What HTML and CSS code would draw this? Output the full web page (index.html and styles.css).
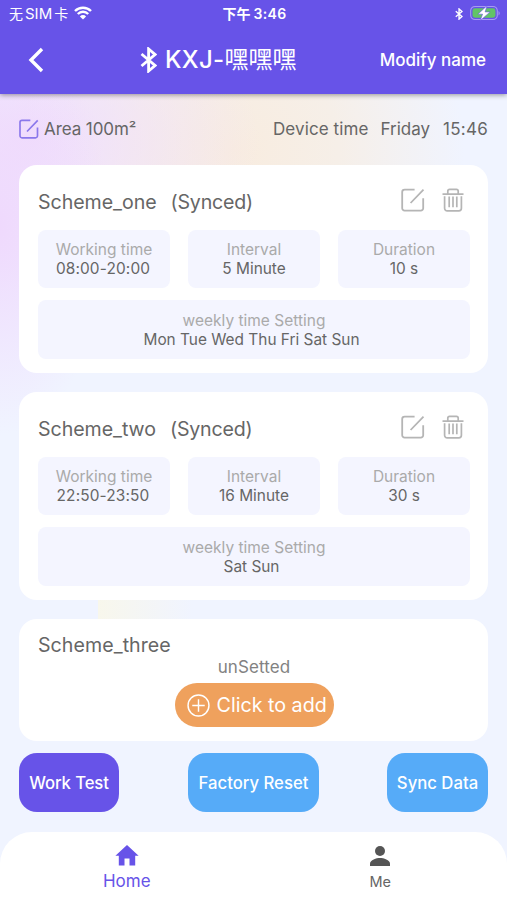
FILE: index.html
```html
<!DOCTYPE html>
<html lang="en">
<head>
<meta charset="utf-8">
<title>KXJ</title>
<link rel="stylesheet" href="styles.css">
</head>
<body>
<svg width="0" height="0" class="defs">
  <symbol id="bt" viewBox="0 0 17 26"><path d="M1.5 7 15 18.5 8.6 24V2L15 7.5 1.5 19"/></symbol>
  <symbol id="edit" viewBox="0 0 24 24"><path d="M13.6 1.6H3.6a2.4 2.4 0 0 0-2.4 2.4v16.2a2.4 2.4 0 0 0 2.4 2.4h16.2a2.4 2.4 0 0 0 2.4-2.4V10.3M9.6 15 22.5 1.6"/></symbol>
  <symbol id="trash" viewBox="0 0 22 24"><path d="M.5 6.2h21M5.8 6V3.2a1.8 1.8 0 0 1 1.8-1.8h6.8a1.8 1.8 0 0 1 1.8 1.8V6M2.6 8.2v12a2.6 2.6 0 0 0 2.6 2.6h11.6a2.6 2.6 0 0 0 2.6-2.6v-12M7.2 8.5v10.8M11 8.5v10.8M14.8 8.5v10.8"/></symbol>
</svg>
<header class="header">
  <div class="status">
    <div class="carrier"><span>无<b>SIM</b>卡</span>
      <svg class="wifi" viewBox="0 0 18 14"><path class="w" d="M1 5a11.3 11.3 0 0 1 16 0M3.8 8a7.3 7.3 0 0 1 10.4 0"/><path d="M9 13.6 5.9 10.4a4.4 4.4 0 0 1 6.2 0z" fill="#fff"/></svg>
    </div>
    <div class="clock">下午<span>3:46</span></div>
    <div class="power">
      <svg class="bt-small"><use href="#bt"/></svg>
      <svg class="battery" viewBox="0 0 31 16"><rect x=".7" y="1.2" width="27.5" height="13.6" rx="4.5" fill="none" stroke="#a79bf2" stroke-width="1.1"/><rect x="2.6" y="3.1" width="23.7" height="9.8" rx="2.5" fill="#62c466"/><path d="M29.5 6v4.6c1.6-.8 1.6-3.8 0-4.6z" fill="#a79bf2"/><path d="M17.6 .4 8.2 9.2h4.8L10.6 15.8 20.8 6.9h-5.2z" fill="#fff" stroke="#6753e8" stroke-width=".6"/></svg>
    </div>
  </div>
  <div class="appbar">
    <svg class="back" viewBox="0 0 16 26"><path d="M14 2 3 13l11 11"/></svg>
    <div class="title"><svg class="bt-big"><use href="#bt"/></svg><h1>KXJ-<span>嘿嘿嘿</span></h1></div>
    <div class="modify">Modify name</div>
  </div>
</header>
<main class="content">
  <div class="info">
    <svg class="ico-area"><use href="#edit"/></svg><span class="area">Area 100m²</span>
    <span class="dev">Device time</span><span class="day">Friday</span><span class="hour">15:46</span>
  </div>
  <section class="card">
    <div class="card-head"><h2>Scheme_one</h2><span class="sync">(Synced)</span><svg class="ico-edit"><use href="#edit"/></svg><svg class="ico-trash"><use href="#trash"/></svg></div>
    <div class="tiles">
      <div class="tile"><label>Working time</label><p class="range">08:00-20:00</p></div>
      <div class="tile"><label>Interval</label><p>5 Minute</p></div>
      <div class="tile"><label>Duration</label><p>10 s</p></div>
      <div class="tile week"><label>weekly time Setting</label><p>Mon Tue Wed Thu Fri Sat Sun</p></div>
    </div>
  </section>
  <section class="card second">
    <div class="card-head"><h2>Scheme_two</h2><span class="sync">(Synced)</span><svg class="ico-edit"><use href="#edit"/></svg><svg class="ico-trash"><use href="#trash"/></svg></div>
    <div class="tiles">
      <div class="tile"><label>Working time</label><p class="range">22:50-23:50</p></div>
      <div class="tile"><label>Interval</label><p>16 Minute</p></div>
      <div class="tile"><label>Duration</label><p>30 s</p></div>
      <div class="tile week"><label>weekly time Setting</label><p>Sat Sun</p></div>
    </div>
  </section>
  <section class="card third">
    <h2>Scheme_three</h2>
    <p class="unset">unSetted</p>
    <div class="add"><svg viewBox="0 0 24 24"><circle cx="12" cy="12" r="10.9"/><path d="M12 5.5v13M5.5 12h13"/></svg><span>Click to add</span></div>
  </section>
  <div class="actions">
    <div class="btn work">Work Test</div>
    <div class="btn factory">Factory Reset</div>
    <div class="btn syncdata">Sync Data</div>
  </div>
</main>
<nav class="nav">
  <div class="tab home"><svg viewBox="0 0 24 21"><path d="M12 0 .4 10.7h3.4V20.5h5.7v-7h5v7h5.7v-9.8h3.4z"/></svg><span>Home</span></div>
  <div class="tab me"><svg viewBox="0 0 20 20"><circle cx="10" cy="5" r="5"/><path d="M0 20v-2.5C0 14 6.5 12 10 12s10 2 10 5.5V20z"/></svg><span>Me</span></div>
</nav>
</body>
</html>
```
FILE: styles.css
```css
* { box-sizing: border-box; margin: 0; padding: 0; }
body {
  width: 507px; height: 900px; overflow: hidden;
  display: flex; flex-direction: column;
  font-family: Inter, "Noto Sans CJK SC", sans-serif;
  color: #666; white-space: nowrap;
  background:
    linear-gradient(90deg, #f8f7ec, #f0f4ff00) 98px 595px / 95px 30px no-repeat,
    radial-gradient(ellipse 110px 210px at 0 225px, #efd9fd, #efd9fd00),
    radial-gradient(ellipse 230px 150px at 30px 140px, #f0defc, #f0defc00),
    radial-gradient(ellipse 230px 220px at 235px 150px, #f8ecdf, #f6efe8 45%, #f0f4ff00),
    #f0f4ff;
}
svg { display: block; flex: none; overflow: visible; fill: none; }
h1, h2 { font-weight: 400; }
.defs { position: absolute; }
.header { height: 94px; flex: none; background: #6753e8; color: #fff; box-shadow: 0 1px 5px #0006; }
.status { height: 27px; display: grid; grid-template-columns: 1fr auto 1fr; align-items: center; padding: 0 7px 0 9px; font-size: 14px; }
.carrier { display: flex; align-items: center; gap: 6px; line-height: 27px; }
.carrier b { font-weight: 400; font-size: 15px; margin: 0 2px; }
.wifi { width: 18px; height: 14px; margin-top: -2px; }
.wifi .w { stroke: #fff; stroke-width: 2.4; }
.clock { font-weight: 600; line-height: 27px; }
.clock span { margin-left: 3px; letter-spacing: .3px; }
.power { display: flex; justify-content: flex-end; align-items: center; gap: 7px; }
.bt-small { width: 8px; height: 12px; stroke: #fff; stroke-width: 3; }
.battery { width: 30px; height: 16px; margin-top: -1px; }
.appbar { height: 66px; display: grid; grid-template-columns: 100px 1fr 108px; align-items: center; padding: 0 21px 0 28px; }
.back { width: 16px; height: 26px; stroke: #fff; stroke-width: 3.4; }
.title { display: flex; align-items: center; gap: 8px; padding-left: 12px; }
.bt-big { width: 17px; height: 26px; stroke: #fff; stroke-width: 2.8; }
h1 { font-size: 24px; font-weight: 500; line-height: 34px; letter-spacing: .3px; }
h1 span { font-weight: 400; letter-spacing: 0; }
.modify { font-size: 17px; font-weight: 500; text-align: right; }
.content { flex: none; height: 738px; padding: 22px 19px 0 19px; }
.info { display: flex; align-items: center; height: 26px; font-size: 17px; }
.ico-area { width: 20px; height: 20px; stroke: #8b78eb; stroke-width: 2; }
.area { margin-left: 5px; letter-spacing: -.08px; }
.dev { margin-left: auto; letter-spacing: .1px; }
.day { margin-left: 12px; }
.hour { margin-left: 13px; letter-spacing: .25px; }
.card { height: 208px; margin-top: 23px; padding: 18px 18px 0 19px; background: #fff; border-radius: 18px; }
.second { margin-top: 19px; }
.card-head { display: flex; align-items: center; height: 38px; margin-bottom: 9px; }
h2, .sync { font-size: 19.6px; line-height: 30px; letter-spacing: -.05px; }
.sync { margin-left: 14px; letter-spacing: -.2px; }
.ico-edit { width: 24px; height: 24px; margin: -4px 17px 0 auto; stroke: #b5b5b5; stroke-width: 1.8; }
.ico-trash { width: 22px; height: 24px; margin: -4px 6px 0 0; stroke: #b5b5b5; stroke-width: 1.7; }
.tiles { display: grid; grid-template-columns: repeat(3, 132px); column-gap: 18px; row-gap: 12px; }
.tile { height: 58px; padding-top: 11px; border-radius: 8px; background: #f4f5ff; text-align: center; font-size: 15.4px; line-height: 19px; }
.tile label { display: block; font-size: 15.5px; line-height: 18px; color: #aaa; }
.tile .range { padding-right: 2px; letter-spacing: .15px; }
.week { grid-column: 1 / -1; height: 58.5px; padding-top: 12px; }
.week p { padding-right: 5px; }
.third { height: 122px; margin-top: 19px; padding-top: 11px; }
.third h2 { letter-spacing: .05px; }
.unset { text-align: center; font-size: 17px; line-height: 22px; margin-top: -4px; color: #828282; letter-spacing: .1px; }
.add { display: flex; align-items: center; width: 159px; height: 44px; margin: 5px auto 0; padding-left: 12px; gap: 7px; border-radius: 22px; background: #efa15d; color: #fff; font-size: 19.7px; }
.add svg { width: 23px; height: 23px; stroke: #fff; stroke-width: 1.5; }
.actions { display: flex; justify-content: space-between; margin-top: 12px; }
.btn { height: 59px; line-height: 60px; border-radius: 18px; background: #56abf8; color: #fff; text-align: center; font-size: 16.7px; font-weight: 500; }
.work { width: 100px; background: #6753e8; letter-spacing: -.1px; }
.factory { width: 131px; margin-left: 37px; margin-right: 36px; }
.syncdata { width: 101px; }
.nav { flex: none; display: grid; grid-template-columns: 1fr 1fr; height: 68px; border-radius: 32px 32px 0 0; background: #fff; }
.tab { display: flex; flex-direction: column; align-items: center; }
.home { color: #6753e8; font-size: 17px; }
.home svg { width: 24px; height: 21px; margin-top: 13px; fill: #6753e8; }
.home span { line-height: 22px; margin-top: 4px; }
.me { font-size: 14.5px; }
.me svg { width: 20px; height: 20px; margin-top: 14px; fill: #555; }
.me span { line-height: 20px; margin-top: 6px; }
```
